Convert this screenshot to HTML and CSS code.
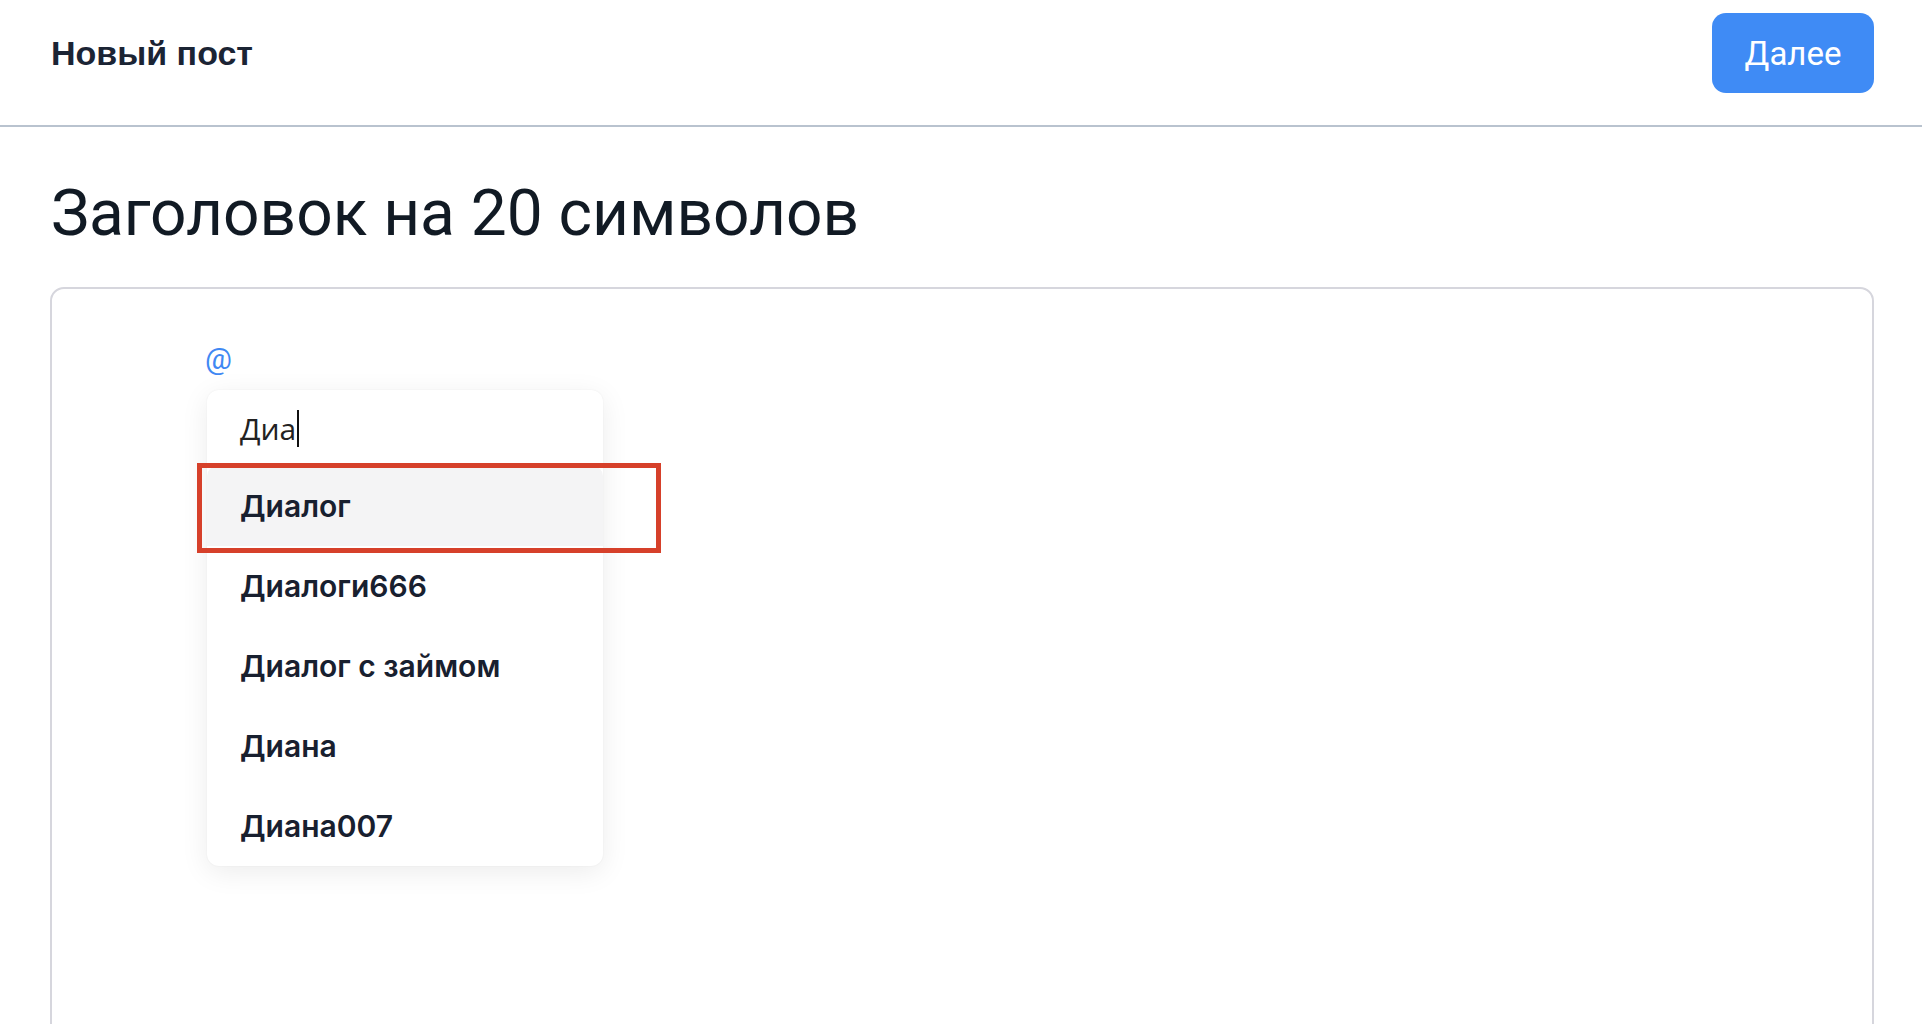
FILE: index.html
```html
<!DOCTYPE html>
<html lang="ru">
<head>
<meta charset="utf-8">
<title>Новый пост</title>
<link rel="stylesheet" href="styles.css">
</head>
<body>
<div class="page">
  <header class="topbar">
    <div class="topbar-title">Новый пост</div>
    <button class="btn-next">Далее</button>
  </header>
  <main class="content">
    <h1 class="post-title">Заголовок на 20 символов</h1>
    <div class="editor">
      <div class="editor-line"><span class="mention-at">@</span></div>
      <div class="mention-menu">
        <div class="mention-input"><span class="mention-query">Диа</span><span class="caret"></span></div>
        <div class="mention-item active">Диалог</div>
        <div class="mention-item">Диалоги666</div>
        <div class="mention-item">Диалог с займом</div>
        <div class="mention-item">Диана</div>
        <div class="mention-item">Диана007</div>
      </div>
      <div class="highlight-box"></div>
    </div>
  </main>
</div>
</body>
</html>
```

FILE: styles.css
```css
html, body {
  margin: 0;
  padding: 0;
  background: #ffffff;
  height: 100%;
  overflow: hidden;
}
.page {
  font-family: Roboto, "Noto Sans", "Liberation Sans", sans-serif;
  color: #161f2c;
}
.topbar {
  display: flex;
  align-items: center;
  justify-content: space-between;
  height: 106px;
  padding: 0 48px 19px 51px;
  border-bottom: 2px solid #b9c3cf;
  box-sizing: content-box;
}
.topbar-title {
  font-family: "Liberation Sans", Arial, sans-serif;
  font-weight: 700;
  font-size: 34px;
  color: #1b2434;
}
.btn-next {
  width: 162px;
  height: 80px;
  border: none;
  border-radius: 14px;
  background: #3f8bf5;
  color: #ffffff;
  font-family: Roboto, sans-serif;
  font-size: 33px;
  font-weight: 400;
  padding: 0;
}
.content {
  padding: 0 48px 0 50px;
}
.post-title {
  margin: 55px 0 41px 1px;
  font-family: Roboto, sans-serif;
  font-weight: 400;
  font-size: 64px;
  line-height: 64px;
  color: #111a24;
}
.editor {
  position: relative;
  height: 900px;
  border: 2px solid #d6d6dd;
  border-radius: 14px;
  padding: 55px 0 0 153px;
  box-sizing: border-box;
}
.editor-line {
  font-size: 30px;
  line-height: 30px;
  height: 30px;
}
.mention-at {
  color: #3f88f3;
  font-family: Roboto, sans-serif;
}
.mention-menu {
  position: absolute;
  left: 155px;
  top: 101px;
  width: 396px;
  background: #ffffff;
  border-radius: 12px;
  box-shadow: 0 6px 28px rgba(0, 0, 0, 0.08), 0 0 2px rgba(0, 0, 0, 0.06);
  overflow: hidden;
}
.mention-input {
  height: 76px;
  display: flex;
  align-items: center;
  padding-left: 33px;
  font-family: "Open Sans", "Noto Sans", sans-serif;
  font-size: 30px;
  color: #222;
}
.caret {
  display: inline-block;
  width: 2px;
  height: 37px;
  background: #111;
  margin-left: 1px;
}
.mention-item {
  height: 80px;
  display: flex;
  align-items: center;
  padding-left: 33px;
  font-family: Inter, Roboto, sans-serif;
  font-weight: 600;
  font-size: 30px;
  color: #18202f;
}
.mention-item.active {
  background: #f4f4f5;
  border-radius: 10px 10px 0 0;
}
.highlight-box {
  position: absolute;
  left: 145px;
  top: 174px;
  width: 464px;
  height: 90px;
  border: 5px solid #d6402a;
  box-sizing: border-box;
}
```
